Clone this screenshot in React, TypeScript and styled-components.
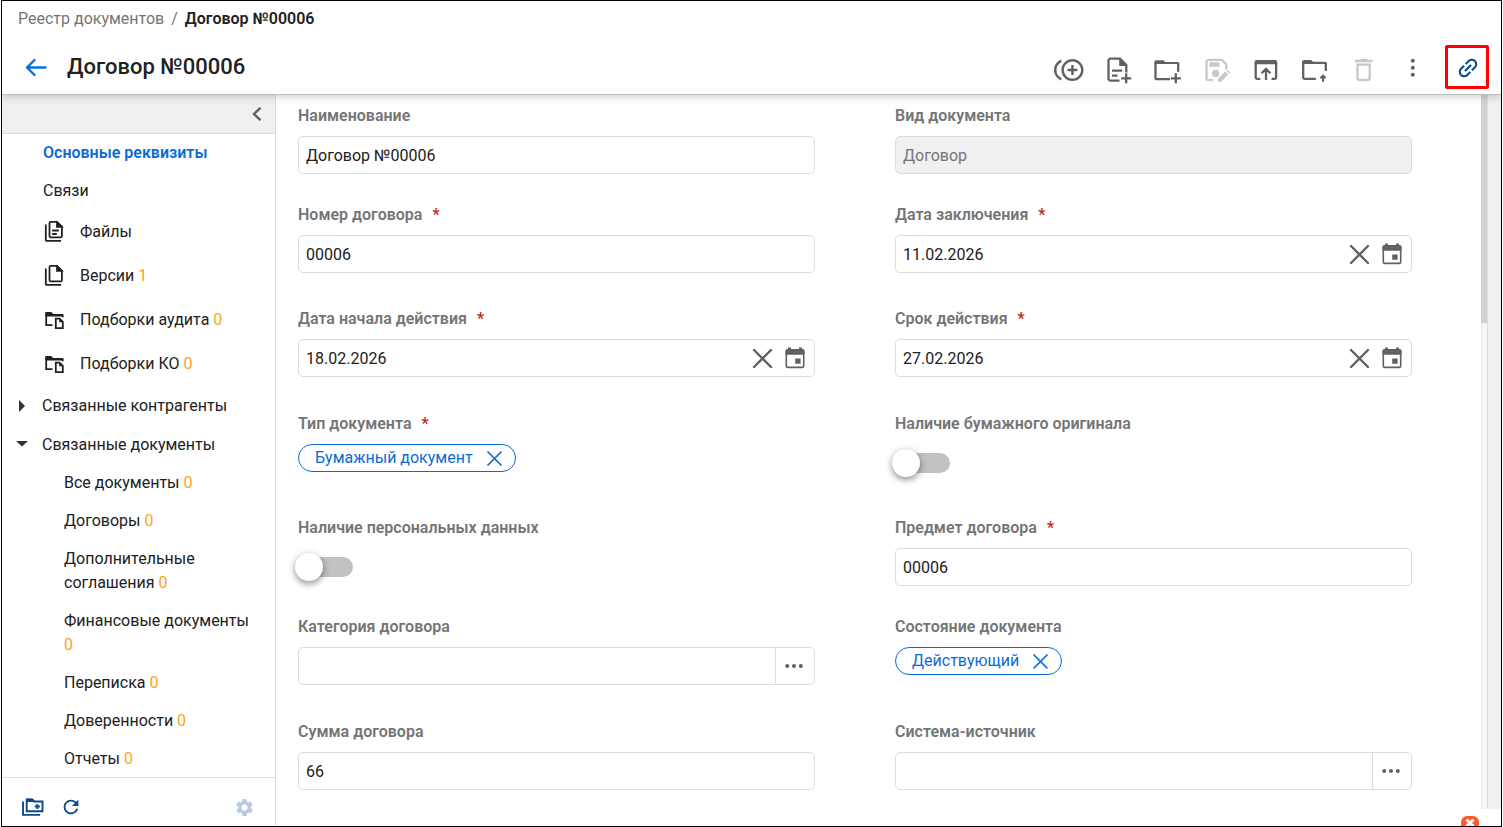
import React, { useId } from 'react';
import styled, { createGlobalStyle } from 'styled-components';
import { MdControlPointDuplicate, MdLink, MdRefresh, MdSettings } from 'react-icons/md';

const color = {
  text: '#212121',
  muted: '#757575',
  icon: '#616161',
  disabled: '#c8c8c8',
  line: '#dcdcdc',
  panel: '#f0f0f0',
  accent: '#0a6cd6',
  navy: '#0c478b',
  count: '#ffa31a',
  danger: '#c62810',
};

const GlobalStyle = createGlobalStyle`
  *, *::before, *::after { box-sizing: border-box; }
  body {
    margin: 0;
    background: #fff;
    color: ${color.text};
    font-family: Roboto, "Liberation Sans", sans-serif;
    font-size: 16px;
    line-height: 24px;
  }
  button, input { font: inherit; color: inherit; }
`;

/* ---------- shell ---------- */

const Shell = styled.div`
  display: flex;
  flex-direction: column;
  height: 100vh;
  margin: 0 1px;
  border: 1px solid #000;
  overflow: hidden;
`;

const Header = styled.header`
  position: relative;
  z-index: 1;
  flex: none;
  background: #fff;
  border-bottom: 1px solid #bdbdbd;
  box-shadow: 0 2px 8px rgba(0, 0, 0, 0.18);
`;

const Breadcrumbs = styled.nav`
  display: flex;
  gap: 7px;
  padding: 6px 16px 0;
  color: ${color.muted};
  a { color: inherit; text-decoration: none; }
  strong { color: ${color.text}; font-weight: 600; }
`;

const TitleBar = styled.div`
  display: flex;
  align-items: center;
  height: 63px;
  padding: 9px 12px 0 21px;
`;

const Title = styled.h1`
  flex: 1;
  margin: 0 0 0 18px;
  font-size: 22px;
  line-height: 32px;
  font-weight: 500;
`;

const IconButton = styled.button<{ $tone?: string }>`
  display: flex;
  align-items: center;
  justify-content: center;
  flex: none;
  padding: 0;
  border: 0;
  background: none;
  color: ${(p) => p.$tone ?? color.icon};
  cursor: pointer;
  &:disabled { cursor: default; }
`;

const Toolbar = styled.div`
  display: flex;
  align-items: center;
  gap: 17px;
  padding-top: 6px;
`;

const LinkFrame = styled.div`
  display: flex;
  align-items: center;
  justify-content: center;
  width: 44px;
  height: 44px;
  margin-left: 16px;
  padding: 2px 0 0 2px;
  border: 3px solid #ff0000;
  border-radius: 2px;
  svg { transform: rotate(-45deg); }
`;

const Body = styled.div`
  display: flex;
  flex: 1;
  min-height: 0;
`;

/* ---------- sidebar ---------- */

const Sidebar = styled.aside`
  display: flex;
  flex-direction: column;
  flex: none;
  width: 274px;
  border-right: 1px solid ${color.line};
`;

const CollapseBar = styled.div`
  display: flex;
  justify-content: flex-end;
  align-items: center;
  flex: none;
  height: 39px;
  padding-right: 11px;
  background: ${color.panel};
  border-bottom: 1px solid ${color.line};
`;

const NavList = styled.ul`
  flex: 1;
  min-height: 0;
  margin: 0;
  padding: 0;
  overflow: hidden;
  list-style: none;
`;

type Level = 'section' | 'file' | 'group' | 'leaf';

const indent: Record<Level, string> = {
  section: '7px 16px 7px 41px',
  file: '10px 16px 10px 40px',
  group: '8px 16px 7px 12px',
  leaf: '7px 16px 7px 62px',
};

const NavLink = styled.a<{ $level: Level; $active?: boolean }>`
  display: flex;
  align-items: center;
  gap: ${(p) => (p.$level === 'group' ? '12px' : '14px')};
  padding: ${(p) => indent[p.$level]};
  color: ${(p) => (p.$active ? color.accent : color.text)};
  font-weight: ${(p) => (p.$active ? 600 : 400)};
  text-decoration: none;
  svg { flex: none; }
`;

const Count = styled.span`
  color: ${color.count};
`;

const SidebarFooter = styled.div`
  display: flex;
  align-items: center;
  gap: 15px;
  flex: none;
  height: 49px;
  padding: 10px 20px 0 19px;
  border-top: 1px solid ${color.line};
  button:last-child { margin-left: auto; }
`;

/* ---------- form ---------- */

const Main = styled.main`
  display: flex;
  flex-direction: column;
  flex: 1;
  min-width: 0;
`;

const Scroller = styled.div`
  display: flex;
  flex: 1;
  min-height: 0;
`;

const Form = styled.form`
  flex: 1;
  min-width: 0;
  padding: 9px 69px 0 22px;
  overflow: hidden;
`;

const FormRow = styled.div<{ $height: number }>`
  display: grid;
  grid-template-columns: 1fr 1fr;
  column-gap: 80px;
  align-items: start;
  min-height: ${(p) => p.$height}px;
`;

const FieldBox = styled.div`
  display: flex;
  flex-direction: column;
  align-items: stretch;
  gap: 8px;
`;

const Label = styled.label`
  color: ${color.muted};
  font-weight: 600;
`;

const Required = styled.span`
  margin-left: 10px;
  color: ${color.danger};
`;

const Control = styled.div<{ $disabled?: boolean }>`
  display: flex;
  align-items: center;
  height: 38px;
  border: 1px solid ${color.line};
  border-radius: 5px;
  background: ${(p) => (p.$disabled ? color.panel : '#fff')};
  color: ${(p) => (p.$disabled ? color.muted : color.text)};
`;

const TextInput = styled.input`
  flex: 1;
  min-width: 0;
  height: 100%;
  padding: 0 8px 0 7px;
  border: 0;
  outline: 0;
  background: transparent;
`;

const DateActions = styled.div`
  display: flex;
  align-items: center;
  gap: 10px;
  padding-right: 7px;
`;

const LookupButton = styled(IconButton)`
  width: 39px;
  height: 100%;
  padding-right: 2px;
  border-left: 1px solid ${color.line};
`;

const Chip = styled.div`
  display: flex;
  align-items: center;
  align-self: flex-start;
  gap: 13px;
  height: 28px;
  padding: 0 12px 0 16px;
  border: 1px solid ${color.accent};
  border-radius: 14px;
  color: ${color.accent};
`;

const SwitchSlot = styled.div`
  display: flex;
  align-items: center;
  height: 38px;
`;

const Switch = styled.input`
  position: relative;
  appearance: none;
  width: 55px;
  height: 20px;
  margin: 0;
  border-radius: 10px;
  background: #c2c2c2;
  &::before {
    content: '';
    position: absolute;
    top: -4px;
    left: -3px;
    width: 28px;
    height: 28px;
    border-radius: 50%;
    background: #fff;
    box-shadow: 0 3px 6px rgba(0, 0, 0, 0.35), 0 1px 10px rgba(0, 0, 0, 0.12);
  }
  &:checked::before { left: 30px; }
`;

const Rail = styled.div`
  flex: none;
  width: 7px;
  background: #f6f6f6;
  border-left: 1px solid #e8e8e8;
  border-right: 1px solid ${color.line};
`;

const Thumb = styled.div`
  height: 32%;
  margin: 0 0 0 -1px;
  background: #d2d2d2;
`;

const Gutter = styled.div`
  flex: none;
  width: 13px;
  background: ${color.panel};
`;

const StatusBar = styled.div`
  display: flex;
  justify-content: flex-end;
  flex: none;
  height: 17px;
  padding: 7px 22px 0 0;
  overflow: hidden;
`;

const ErrorBadge = styled.button`
  display: flex;
  justify-content: center;
  align-items: flex-start;
  flex: none;
  width: 18px;
  height: 14px;
  padding: 1px 0 0;
  border: 0;
  border-radius: 6px;
  background: #ff5a2b;
  color: #fff;
`;

/* ---------- icons ---------- */

const Glyph = ({ size = 32, children, stroke = 2.3 }: { size?: number; stroke?: number; children: React.ReactNode }) => (
  <svg width={size} height={size} viewBox={`0 0 ${size} ${size}`} fill="none" stroke="currentColor" strokeWidth={stroke} aria-hidden="true">
    {children}
  </svg>
);

const BackIcon = () => (
  <Glyph size={26} stroke={2.4}>
    <path d="M11.5 6 4 13.5l7.5 7.5M4 13.5h18.5" strokeLinecap="round" strokeLinejoin="round" />
  </Glyph>
);

const DocAddIcon = () => (
  <Glyph>
    <path d="M16.5 26.6H7.4a1.9 1.9 0 0 1-1.9-1.9V6.6a1.9 1.9 0 0 1 1.9-1.9H17l6.3 6.3v7.5M9 16.7h10.2M9 21.7h5.6M23.2 19.3v10M18.2 24.3h10" />
    <path d="M16.2 4.2v7.7h7.8z" fill="currentColor" stroke="none" />
  </Glyph>
);

const FolderAddIcon = () => (
  <Glyph>
    <path d="M18 25.2H5a1.5 1.5 0 0 1-1.5-1.5V9M26.2 17.7V9M23.8 19.3v10M18.8 24.3h10" />
    <path d="M2.3 10V8.2a2 2 0 0 1 2-2h6.9l2.2 1.7h12a2 2 0 0 1 2 2V10z" fill="currentColor" stroke="none" />
  </Glyph>
);

const SaveEditIcon = () => (
  <Glyph>
    <path d="M11.8 26.2H7.4a1.9 1.9 0 0 1-1.9-1.9V7.8a1.9 1.9 0 0 1 1.9-1.9h13.4l4.4 4.4v5" />
    <path d="M8.4 8.3h10v4.5h-10zM17 27.7v-3l7.2-7.2 3 3-7.2 7.2zM25.2 16.6l1-1 3 3-1 1z" fill="currentColor" stroke="none" />
    <circle cx="14.6" cy="19.4" r="3.6" fill="currentColor" stroke="none" />
  </Glyph>
);

const OpenIcon = () => (
  <Glyph>
    <path d="M10.3 24.9H7.2a1.5 1.5 0 0 1-1.5-1.5V9M21.5 24.9h3.1a1.5 1.5 0 0 0 1.5-1.5V9M16 26V15M11.6 19.2l4.4-4.4 4.4 4.4" />
    <path d="M4.6 10.3V8a2 2 0 0 1 2-2h18.6a2 2 0 0 1 2 2v2.3z" fill="currentColor" stroke="none" />
  </Glyph>
);

const FolderUpIcon = () => (
  <Glyph>
    <path d="M16.8 24.9H5.7a1.5 1.5 0 0 1-1.5-1.5V9M26.8 17V9" />
    <path d="M24 27.8v-5.5M21.4 24.3l2.6-2.6 2.6 2.6" strokeWidth={2} />
    <path d="M3 10V8a2 2 0 0 1 2-2h6.9l2.2 1.7H26a2 2 0 0 1 2 2v.3z" fill="currentColor" stroke="none" />
  </Glyph>
);

const TrashIcon = () => (
  <Glyph>
    <path d="M9.5 10.6h12.2v13.8a1.6 1.6 0 0 1-1.6 1.6h-9a1.6 1.6 0 0 1-1.6-1.6zM7 7h17.5" />
    <path d="M11.5 6.4l1-1.7h6.4l1 1.7z" fill="currentColor" stroke="none" />
  </Glyph>
);

const MoreIcon = () => (
  <Glyph>
    <g fill="currentColor" stroke="none">
      <circle cx="15.8" cy="6.8" r="2" />
      <circle cx="15.8" cy="13.8" r="2" />
      <circle cx="15.8" cy="20.8" r="2" />
    </g>
  </Glyph>
);

const EllipsisIcon = () => (
  <Glyph size={20}>
    <g fill="currentColor" stroke="none">
      <circle cx="3.2" cy="10" r="2" />
      <circle cx="10" cy="10" r="2" />
      <circle cx="16.8" cy="10" r="2" />
    </g>
  </Glyph>
);

const ChevronIcon = () => (
  <Glyph size={14} stroke={2.4}>
    <path d="M10.5 .8 4 7l6.5 6.2" />
  </Glyph>
);

const CopiesIcon = ({ lines }: { lines?: boolean }) => (
  <Glyph size={24} stroke={1.8}>
    <path d="M3.8 4.5v15.4a1 1 0 0 0 1 1H19" />
    <path d="M7.5 3a1.2 1.2 0 0 1 1.2-1.2H15l4.9 4.9v9.5a1.2 1.2 0 0 1-1.2 1.2H8.7a1.2 1.2 0 0 1-1.2-1.2z" />
    <path d="M15 2.5v4.3h4.5z" fill="currentColor" />
    {lines && <path d="M10.2 10.5h6.6M10.2 14h4.6" />}
  </Glyph>
);

const FolderDocIcon = () => (
  <Glyph size={24} stroke={1.8}>
    <path d="M10.5 17.2H4.2V6M3.4 7.5h17.3v1.7" />
    <path d="M3.3 4h6l1.8 2h9a1 1 0 0 1 1 1v1H3.3z" fill="currentColor" stroke="none" />
    <path d="M13.8 10.7h3.8l3.2 3.2v6.2h-7z" />
    <path d="M17.2 10.5v3.7h3.7z" fill="currentColor" stroke="none" />
  </Glyph>
);

const FoldersAddIcon = () => (
  <Glyph size={24} stroke={1.9}>
    <path d="M2 6.5v13.4h17" />
    <path d="M5.7 4.5h5.6l2 2h8.2v9.8H5.7z" />
    <path d="M5 3.8h6.6l2.2 2.2v1H5z" fill="currentColor" stroke="none" />
    <path d="M16.3 8.9v5.2M13.7 11.5h5.2" />
  </Glyph>
);

const CloseIcon = ({ size, stroke }: { size: number; stroke: number }) => (
  <Glyph size={size} stroke={stroke}>
    <path d={`M2 2 ${size - 2} ${size - 2}M${size - 2} 2 2 ${size - 2}`} strokeLinecap="round" />
  </Glyph>
);

const BadgeCross = () => (
  <Glyph size={12} stroke={3}>
    <path d="M2.5 2.5l7 7M9.5 2.5l-7 7" />
  </Glyph>
);

const CalendarIcon = () => (
  <Glyph size={24} stroke={1.6}>
    <rect x="3.3" y="4" width="17.4" height="17.4" rx="1.5" />
    <path d="M2.5 8.8V5a2 2 0 0 1 2-2h15a2 2 0 0 1 2 2v3.800zM5 1.500h3v3H5zM16 1.500h3v3h-3zM12.200 12.400h5.400v5.400h-5.400z" fill="currentColor" stroke="none" />
  </Glyph>
);

const Caret = ({ open }: { open?: boolean }) => (
  <Glyph size={16}>
    <path d={open ? 'M2 4h12l-6 5.5z' : 'M5 2v12l6-6z'} fill="#333" stroke="none" />
  </Glyph>
);

/* ---------- parts ---------- */

type NavItem = { text: string; level: Level; count?: number; active?: boolean; icon?: React.ReactNode };

const navItems: NavItem[] = [
  { text: 'Основные реквизиты', level: 'section', active: true },
  { text: 'Связи', level: 'section' },
  { text: 'Файлы', level: 'file', icon: <CopiesIcon lines /> },
  { text: 'Версии', level: 'file', count: 1, icon: <CopiesIcon /> },
  { text: 'Подборки аудита', level: 'file', count: 0, icon: <FolderDocIcon /> },
  { text: 'Подборки КО', level: 'file', count: 0, icon: <FolderDocIcon /> },
  { text: 'Связанные контрагенты', level: 'group', icon: <Caret /> },
  { text: 'Связанные документы', level: 'group', icon: <Caret open /> },
  { text: 'Все документы', level: 'leaf', count: 0 },
  { text: 'Договоры', level: 'leaf', count: 0 },
  { text: 'Дополнительные соглашения', level: 'leaf', count: 0 },
  { text: 'Финансовые документы', level: 'leaf', count: 0 },
  { text: 'Переписка', level: 'leaf', count: 0 },
  { text: 'Доверенности', level: 'leaf', count: 0 },
  { text: 'Отчеты', level: 'leaf', count: 0 },
];

type FieldProps = {
  label: string;
  kind?: 'text' | 'date' | 'lookup' | 'chip' | 'switch';
  value?: string;
  required?: boolean;
  disabled?: boolean;
};

const Field = ({ label, kind = 'text', value = '', required, disabled }: FieldProps) => {
  const id = useId();
  return (
    <FieldBox>
      <Label htmlFor={id}>
        {label}
        {required && <Required>*</Required>}
      </Label>
      {kind === 'switch' && (
        <SwitchSlot>
          <Switch id={id} type="checkbox" role="switch" />
        </SwitchSlot>
      )}
      {kind === 'chip' && (
        <Chip>
          {value}
          <IconButton id={id} type="button" $tone={color.accent} aria-label={`Удалить: ${value}`}>
            <CloseIcon size={17} stroke={1.7} />
          </IconButton>
        </Chip>
      )}
      {(kind === 'text' || kind === 'date' || kind === 'lookup') && (
        <Control $disabled={disabled}>
          <TextInput id={id} type="text" defaultValue={value} disabled={disabled} />
          {kind === 'date' && (
            <DateActions>
              <IconButton type="button" aria-label="Очистить">
                <CloseIcon size={21} stroke={2.4} />
              </IconButton>
              <IconButton type="button" aria-label="Открыть календарь">
                <CalendarIcon />
              </IconButton>
            </DateActions>
          )}
          {kind === 'lookup' && (
            <LookupButton type="button" aria-label="Выбрать">
              <EllipsisIcon />
            </LookupButton>
          )}
        </Control>
      )}
    </FieldBox>
  );
};

const rows: { height: number; fields: FieldProps[] }[] = [
  { height: 99, fields: [{ label: 'Наименование', value: 'Договор №00006' }, { label: 'Вид документа', value: 'Договор', disabled: true }] },
  { height: 104, fields: [{ label: 'Номер договора', value: '00006', required: true }, { label: 'Дата заключения', kind: 'date', value: '11.02.2026', required: true }] },
  { height: 105, fields: [{ label: 'Дата начала действия', kind: 'date', value: '18.02.2026', required: true }, { label: 'Срок действия', kind: 'date', value: '27.02.2026', required: true }] },
  { height: 104, fields: [{ label: 'Тип документа', kind: 'chip', value: 'Бумажный документ', required: true }, { label: 'Наличие бумажного оригинала', kind: 'switch' }] },
  { height: 99, fields: [{ label: 'Наличие персональных данных', kind: 'switch' }, { label: 'Предмет договора', value: '00006', required: true }] },
  { height: 105, fields: [{ label: 'Категория договора', kind: 'lookup' }, { label: 'Состояние документа', kind: 'chip', value: 'Действующий' }] },
  { height: 99, fields: [{ label: 'Сумма договора', value: '66' }, { label: 'Система-источник', kind: 'lookup' }] },
];

export default function App() {
  return (
    <>
      <GlobalStyle />
      <Shell>
        <Header>
          <Breadcrumbs>
            <a href="#registry">Реестр документов</a>
            <span>/</span>
            <strong>Договор №00006</strong>
          </Breadcrumbs>
          <TitleBar>
            <IconButton type="button" $tone="#0a6fde" aria-label="Назад"><BackIcon /></IconButton>
            <Title>Договор №00006</Title>
            <Toolbar>
              <IconButton type="button" aria-label="Дублировать"><MdControlPointDuplicate size={32} viewBox="0 -1 26 26" /></IconButton>
              <IconButton type="button" aria-label="Добавить документ"><DocAddIcon /></IconButton>
              <IconButton type="button" aria-label="Добавить папку"><FolderAddIcon /></IconButton>
              <IconButton type="button" aria-label="Сохранить" disabled $tone={color.disabled}><SaveEditIcon /></IconButton>
              <IconButton type="button" aria-label="Открыть"><OpenIcon /></IconButton>
              <IconButton type="button" aria-label="Выгрузить"><FolderUpIcon /></IconButton>
              <IconButton type="button" aria-label="Удалить" disabled $tone={color.disabled}><TrashIcon /></IconButton>
              <IconButton type="button" aria-label="Ещё"><MoreIcon /></IconButton>
            </Toolbar>
            <LinkFrame>
              <IconButton type="button" $tone={color.navy} aria-label="Скопировать ссылку"><MdLink size={26} /></IconButton>
            </LinkFrame>
          </TitleBar>
        </Header>
        <Body>
          <Sidebar>
            <CollapseBar>
              <IconButton type="button" aria-label="Свернуть"><ChevronIcon /></IconButton>
            </CollapseBar>
            <NavList>
              {navItems.map((item) => (
                <li key={item.text}>
                  <NavLink href="#" $level={item.level} $active={item.active}>
                    {item.icon}
                    <span>
                      {item.text}
                      {item.count !== undefined && <> <Count>{item.count}</Count></>}
                    </span>
                  </NavLink>
                </li>
              ))}
            </NavList>
            <SidebarFooter>
              <IconButton type="button" $tone={color.navy} aria-label="Добавить подборку"><FoldersAddIcon /></IconButton>
              <IconButton type="button" $tone={color.navy} aria-label="Обновить"><MdRefresh size={22} /></IconButton>
              <IconButton type="button" $tone="#b9cbdf" aria-label="Настройки"><MdSettings size={21} /></IconButton>
            </SidebarFooter>
          </Sidebar>
          <Main>
            <Scroller>
              <Form>
                {rows.map((row) => (
                  <FormRow key={row.fields[0].label} $height={row.height}>
                    {row.fields.map((field) => <Field key={field.label} {...field} />)}
                  </FormRow>
                ))}
              </Form>
              <Rail><Thumb /></Rail>
              <Gutter />
            </Scroller>
            <StatusBar>
              <ErrorBadge type="button" aria-label="Ошибки"><BadgeCross /></ErrorBadge>
            </StatusBar>
          </Main>
        </Body>
      </Shell>
    </>
  );
}
